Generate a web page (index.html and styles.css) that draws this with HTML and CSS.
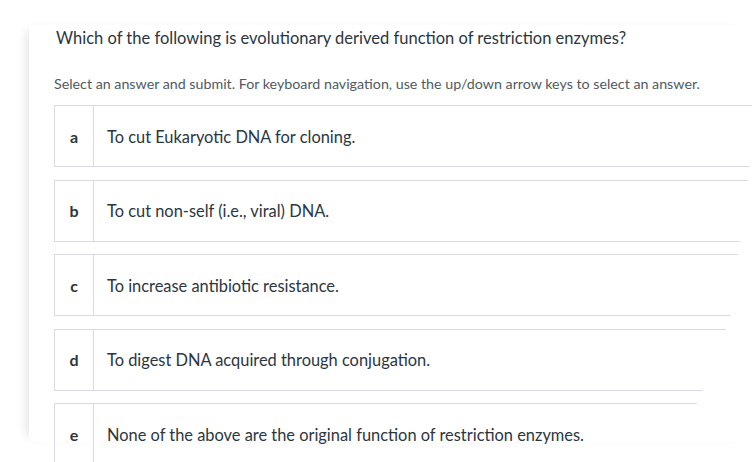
FILE: index.html
```html
<!DOCTYPE html>
<html lang="en">
<head>
<meta charset="utf-8">
<title>Question</title>
<link rel="stylesheet" href="styles.css">
</head>
<body>
<div class="card">
  <h1 class="question">Which of the following is evolutionary derived function of restriction enzymes?</h1>
  <p class="hint">Select an answer and submit. For keyboard navigation, use the up/down arrow keys to select an answer.</p>
  <ul class="options">
    <li class="option" style="--tw:698px; --bw:695px;"><div class="row"><span class="letter">a</span><span class="text">To cut Eukaryotic DNA for cloning.</span></div></li>
    <li class="option" style="--tw:694px; --bw:686px;"><div class="row"><span class="letter">b</span><span class="text">To cut non-self (i.e., viral) DNA.</span></div></li>
    <li class="option" style="--tw:684px; --bw:676px;"><div class="row"><span class="letter">c</span><span class="text">To increase antibiotic resistance.</span></div></li>
    <li class="option" style="--tw:672px; --bw:649px;"><div class="row"><span class="letter">d</span><span class="text">To digest DNA acquired through conjugation.</span></div></li>
    <li class="option" style="--tw:643px; --bw:630px;"><div class="row"><span class="letter">e</span><span class="text">None of the above are the original function of restriction enzymes.</span></div></li>
  </ul>
</div>
</body>
</html>
```

FILE: styles.css
```css
html, body {
  margin: 0;
  padding: 0;
  background: #ffffff;
  overflow: hidden;
}
body {
  width: 752px;
  height: 462px;
  font-family: Lato, "Noto Sans", sans-serif;
  color: #2b3640;
}
.card {
  margin: 25px 0 0 29px;
  height: 417px;
  padding: 0 0 0 25px;
  background: #fff;
  box-shadow: -8px 0 10px -6px rgba(0, 0, 0, 0.12);
  border-bottom-left-radius: 6px;
}
.question {
  margin: 0;
  padding: 1px 0 0 2px;
  font-size: 16.5px;
  font-weight: 400;
  line-height: 24px;
  color: #2b3640;
}
.hint {
  margin: 24px 0 0 0;
  font-size: 14.25px;
  line-height: 20px;
  color: #4f5a63;
}
.options {
  list-style: none;
  margin: 11px 0 0 0;
  padding: 0;
  display: flex;
  flex-direction: column;
  gap: 12.5px;
}
.option {
  display: flex;
  flex-direction: column;
}
.option::before,
.option::after {
  content: "";
  display: block;
  height: 1px;
  background: #d9dae0;
}
.option::before { width: var(--tw); }
.option::after { width: var(--bw); }
.row {
  display: flex;
  align-items: center;
  height: 60px;
  border-left: 1px solid #d9dae0;
}
.letter {
  width: 38px;
  height: 100%;
  display: flex;
  align-items: center;
  justify-content: center;
  border-right: 1px solid #d9dae0;
  font-size: 16px;
  font-weight: 700;
  color: #2b3640;
}
.text {
  padding-left: 13px;
  font-size: 16.4px;
  color: #2b3640;
}
```
